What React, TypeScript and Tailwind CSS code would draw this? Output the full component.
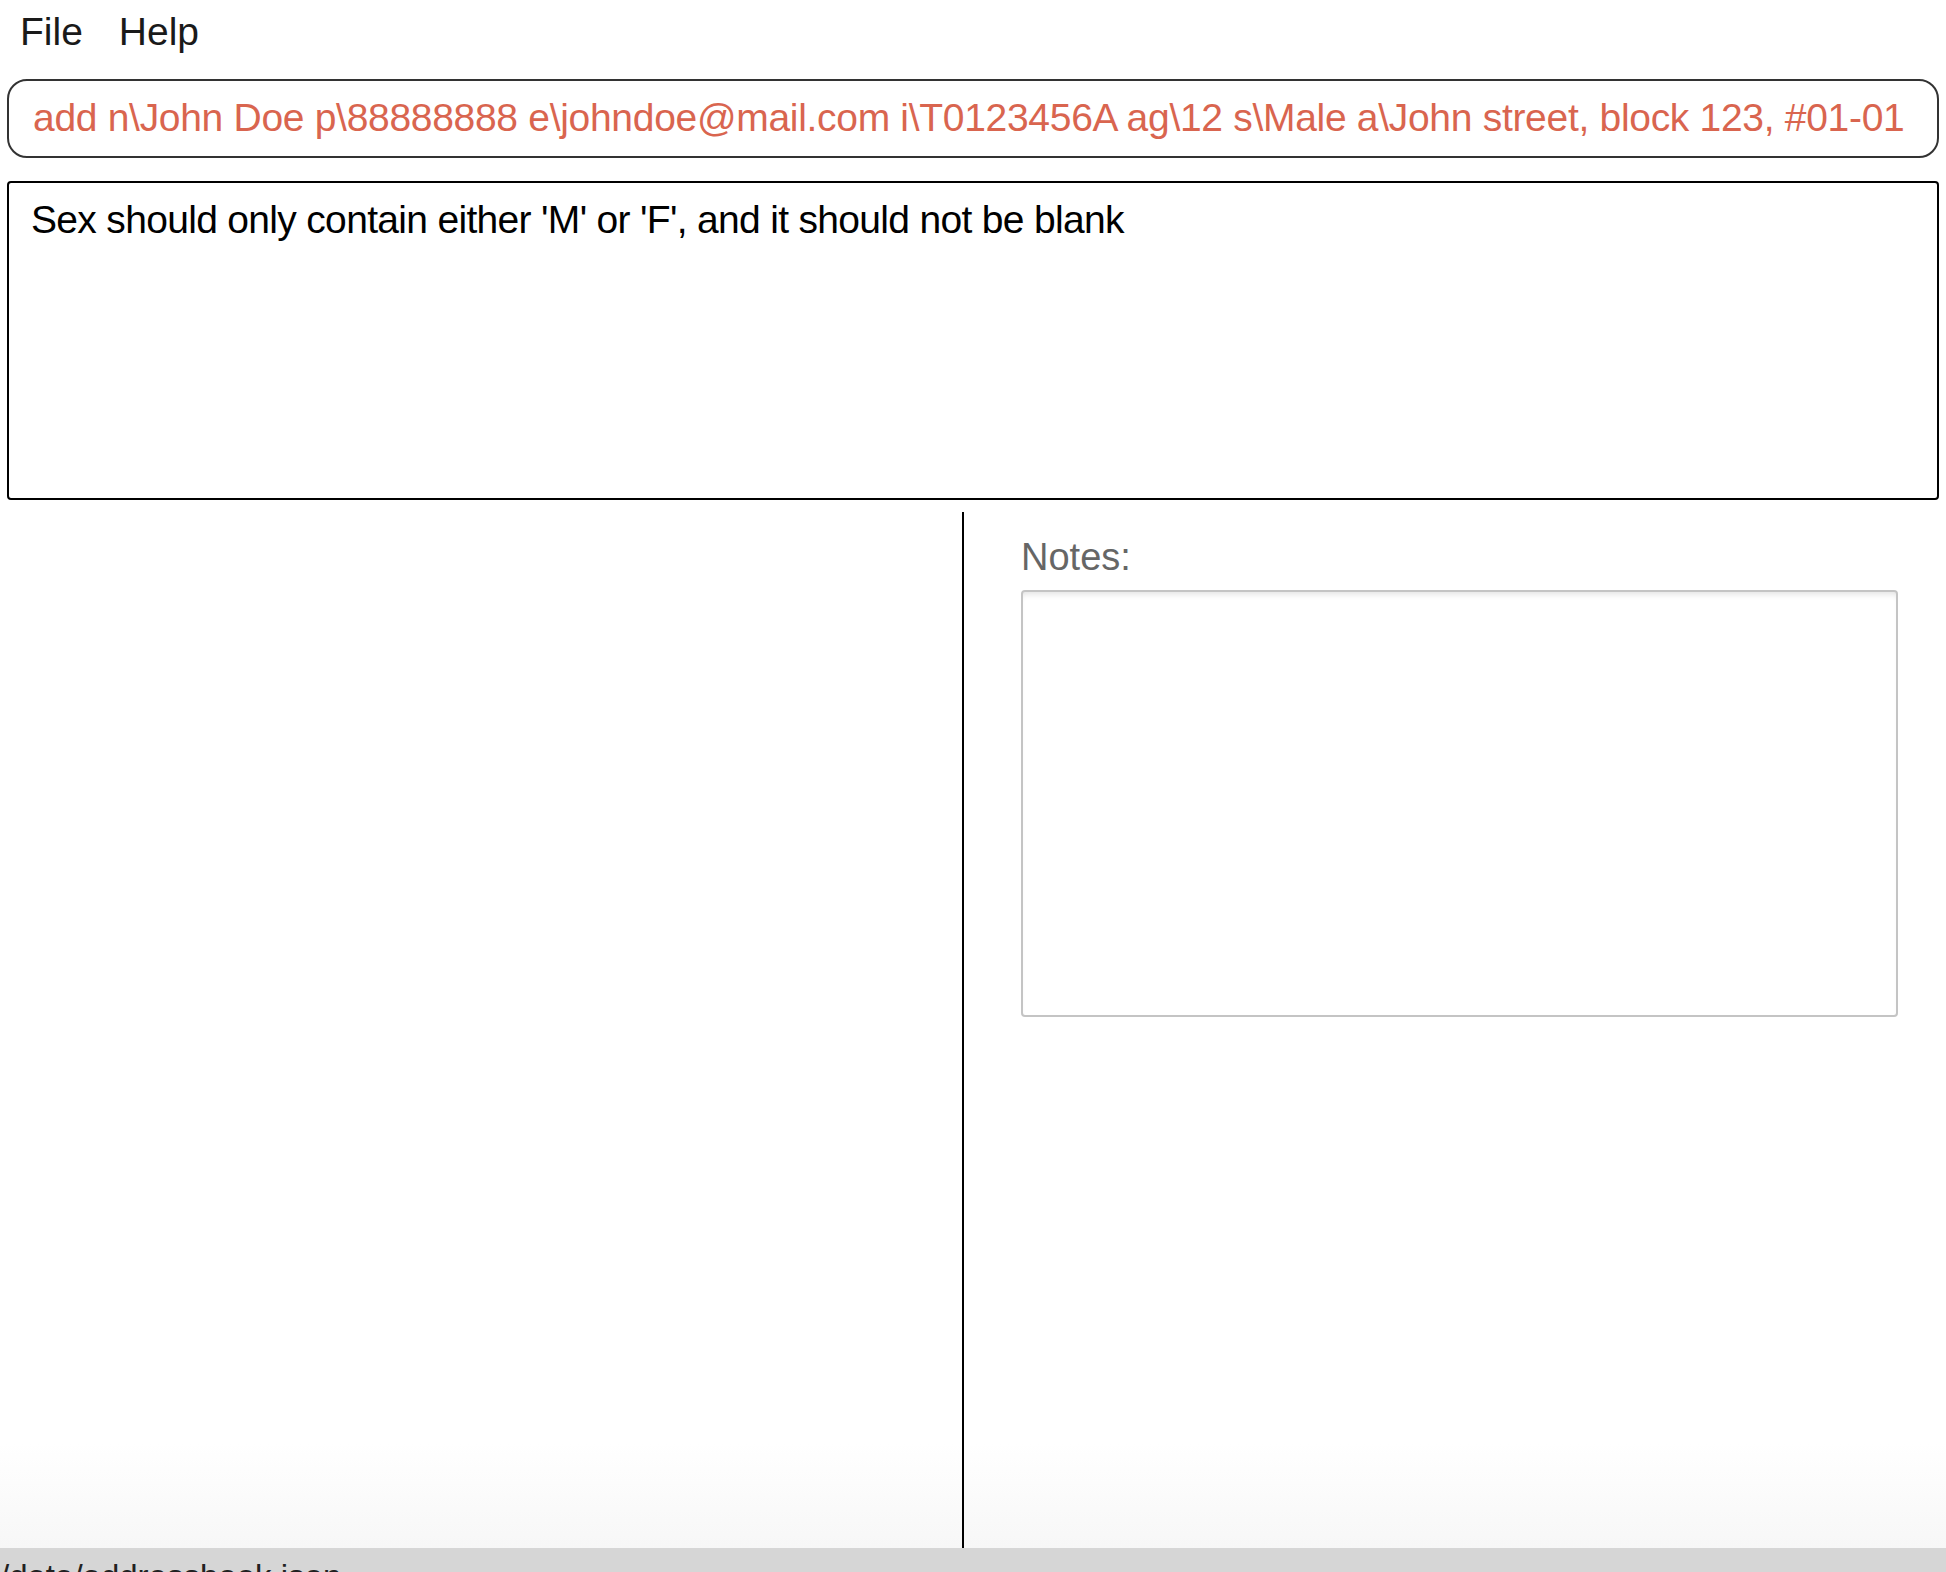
const font = { fontFamily: '"Liberation Sans", Arial, sans-serif' }

const COMMAND =
    "add n\\John Doe p\\88888888 e\\johndoe@mail.com i\\T0123456A ag\\12 s\\Male a\\John street, block 123, #01-01"

const MenuBar = () => (
    <div className="h-[64px] flex items-center gap-[36px] pl-[20px] text-[39px] text-[#1a1a1a]">
        <span>File</span>
        <span>Help</span>
    </div>
)

const CommandBox = () => (
    <div className="mx-[7px] mt-[15px] h-[79px] border-2 border-[#333333] rounded-[20px] flex items-center pl-[24px] overflow-hidden">
        <span className="text-[39px] text-[#d9654f] whitespace-nowrap tracking-[-0.3px]">{COMMAND}</span>
    </div>
)

const ResultBox = () => (
    <div className="mx-[7px] mt-[23px] h-[319px] border-2 border-black rounded-[4px] pl-[22px] pt-[8px]">
        <span className="text-[39px] text-black whitespace-nowrap tracking-[-0.68px]">
            Sex should only contain either 'M' or 'F', and it should not be blank
        </span>
    </div>
)

const NotesPanel = () => (
    <div className="flex-1 flex flex-col pl-[57px] pr-[48px] pt-[38px]">
        <span className="text-[38px] text-[#666666] leading-none">Notes:</span>
        <div className="mt-[14px] h-[427px] border-2 border-[#c4c4c4] rounded-[4px] bg-white shadow-[inset_0_6px_6px_-4px_rgba(0,0,0,0.12)]" />
    </div>
)

export default function App() {
    return (
        <div className="w-[1946px] h-[1572px] overflow-hidden flex flex-col bg-white" style={font}>
            <MenuBar />
            <CommandBox />
            <ResultBox />
            <div className="flex-1 flex bg-linear-to-b from-white from-[90%] to-[#f7f7f7]">
                <div className="w-[962px]" />
                <div className="w-[2px] bg-black mt-[12px]" />
                <NotesPanel />
            </div>
            <div className="h-[24px] bg-[#d6d6d6] pt-[12px] overflow-hidden">
                <span className="block text-[33px] text-[#222222] leading-none whitespace-nowrap">/data/addressbook.json</span>
            </div>
        </div>
    )
}
